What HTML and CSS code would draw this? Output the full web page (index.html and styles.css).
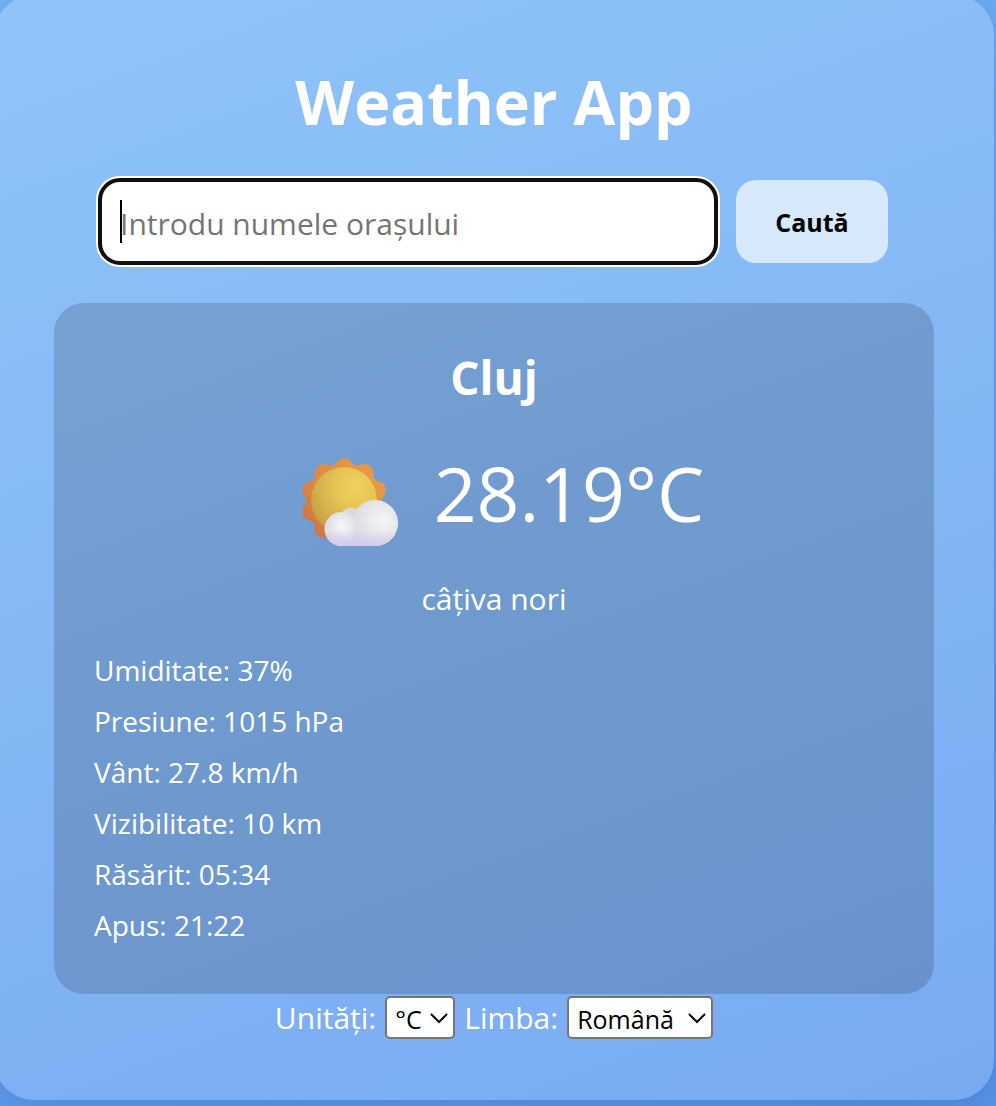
FILE: index.html
```html
<!DOCTYPE html>
<html lang="ro">
<head>
<meta charset="utf-8">
<meta name="viewport" content="width=device-width, initial-scale=1">
<title>Weather App</title>
<link rel="stylesheet" href="styles.css">
</head>
<body>
<main class="card">
  <h1 class="title">Weather App</h1>
  <form class="search">
    <div class="field">
      <input class="city-input" type="text" placeholder="Introdu numele orașului" aria-label="Introdu numele orașului">
    </div>
    <button class="search-button" type="button">Caută</button>
  </form>
  <section class="weather">
    <h2 class="city">Cluj</h2>
    <div class="now">
      <svg class="icon" viewBox="0 0 120 120" aria-hidden="true">
        <defs>
          <linearGradient id="rays" gradientUnits="userSpaceOnUse" x1="30" y1="-30" x2="-30" y2="30">
            <stop offset="0" stop-color="#ea9a44"/>
            <stop offset=".5" stop-color="#df8a42"/>
            <stop offset="1" stop-color="#cf7746"/>
          </linearGradient>
          <radialGradient id="disk" cx=".68" cy=".3" r=".75">
            <stop offset="0" stop-color="#f1d25f"/>
            <stop offset=".45" stop-color="#e4c453"/>
            <stop offset="1" stop-color="#c8a245"/>
          </radialGradient>
          <radialGradient id="puff-large" gradientUnits="userSpaceOnUse" cx="98" cy="79" r="30">
            <stop offset="0" stop-color="#f6f6f8"/>
            <stop offset=".5" stop-color="#e8e8eb"/>
            <stop offset="1" stop-color="#dadadf"/>
          </radialGradient>
          <radialGradient id="puff-small" gradientUnits="userSpaceOnUse" cx="58" cy="85" r="18">
            <stop offset="0" stop-color="#f8f8fb"/>
            <stop offset="1" stop-color="#dadadf"/>
          </radialGradient>
          <linearGradient id="base" gradientUnits="userSpaceOnUse" x1="0" y1="90" x2="0" y2="105">
            <stop offset="0" stop-color="#d4c8ee" stop-opacity="0"/>
            <stop offset="1" stop-color="#d4c8ee" stop-opacity=".9"/>
          </linearGradient>
        </defs>
        <g transform="translate(60 60)" fill="url(#rays)">
          <circle r="38"/>
          <path d="M-9-34a9 9 0 0 1 18 0zM-9 34a9 9 0 0 0 18 0z"/>
          <circle cx="20" cy="-27.500" r="9.500"/>
          <circle cx="32.300" cy="-10.500" r="9.500"/>
          <circle cx="32.300" cy="10.500" r="9.500"/>
          <circle cx="20" cy="27.500" r="9.500"/>
          <circle cx="-20" cy="27.500" r="9.500"/>
          <circle cx="-32.300" cy="10.500" r="9.500"/>
          <circle cx="-32.300" cy="-10.500" r="9.500"/>
          <circle cx="-20" cy="-27.500" r="9.500"/>
        </g>
        <circle cx="60" cy="59" r="33" fill="url(#disk)"/>
        <circle cx="67" cy="77" r="10.500" fill="#dadad7"/>
        <path fill="url(#puff-large)" d="M58 105a17 17 0 1 1 11-29.500A23 23 0 1 1 89.500 105z"/>
        <circle cx="58" cy="88" r="17" fill="url(#puff-small)"/>
        <path fill="url(#base)" d="M41 88a17 17 0 0 0 17 17h31.500a23 23 0 0 0 23-23z"/>
      </svg>
      <div class="temperature">28.19°C</div>
    </div>
    <p class="description">câțiva nori</p>
    <div class="details">
      <p class="detail">Umiditate: 37%</p>
      <p class="detail">Presiune: 1015 hPa</p>
      <p class="detail">Vânt: 27.8 km/h</p>
      <p class="detail">Vizibilitate: 10 km</p>
      <p class="detail">Răsărit: 05:34</p>
      <p class="detail">Apus: 21:22</p>
    </div>
  </section>
  <div class="settings">
    <label for="units">Unități:</label>
    <span class="picker"><select id="units" class="select"><option>°C</option><option>°F</option></select><svg class="chevron" viewBox="0 0 18 12" aria-hidden="true"><path d="M1 2l8 8 8-8"/></svg></span>
    <label for="language">Limba:</label>
    <span class="picker"><select id="language" class="select select-wide"><option>Română</option><option>English</option></select><svg class="chevron" viewBox="0 0 18 12" aria-hidden="true"><path d="M1 2l8 8 8-8"/></svg></span>
  </div>
</main>
</body>
</html>
```
FILE: styles.css
```css
* {
  box-sizing: border-box;
}

body {
  margin: 0;
  min-height: 100vh;
  overflow: hidden;
  font-family: "Segoe UI", "Open Sans", "Noto Sans", sans-serif;
  font-size: 30px;
  color: #fff;
  background: linear-gradient(160deg, #74b5f8, #5895ed);
}

.card {
  margin: -5px 2px 6px -6px;
  padding: 60px 60px 61px;
  border-radius: 40px;
  background: rgba(255, 255, 255, 0.2);
  box-shadow: 0 8px 40px rgba(0, 0, 0, 0.15);
}

.title {
  margin: 0 0 32px;
  font-size: 61px;
  line-height: 93px;
  font-weight: 700;
  text-align: center;
}

.search {
  display: flex;
  justify-content: center;
  gap: 20px;
  margin: 0 46px 40px;
}

.field {
  position: relative;
  flex: 1;
  display: flex;
}

/* Text caret at the start of the field */
.field::before {
  content: "";
  position: absolute;
  left: 20px;
  top: 20px;
  width: 2px;
  height: 43px;
  background: #000;
}

.city-input {
  flex: 1;
  min-width: 0;
  height: 83px;
  padding: 4px 20px 0;
  border: 0;
  border-radius: 20px;
  outline: 4px solid #101010;
  outline-offset: -2px;
  box-shadow: 0 0 0 4px #fff;
  background: #fff;
  font-family: inherit;
  font-size: 30px;
  color: #000;
}

.city-input::placeholder {
  color: #757575;
  opacity: 1;
}

.search-button {
  width: 152px;
  padding: 0;
  border: 0;
  border-radius: 20px;
  background: rgba(255, 255, 255, 0.67);
  font-family: inherit;
  font-size: 25px;
  font-weight: 700;
  color: #000;
}

.weather {
  padding: 40px 40px 49px;
  border-radius: 30px;
  background: rgba(0, 0, 0, 0.15);
}

.city {
  margin: 0 0 30px;
  font-size: 46px;
  line-height: 68px;
  text-align: center;
}

.now {
  display: flex;
  align-items: flex-start;
  justify-content: center;
  gap: 30px;
}

.icon {
  width: 120px;
  height: 120px;
}

.temperature {
  font-size: 75px;
  line-height: 104px;
}

.description {
  margin: 18px 0 31px;
  line-height: 40px;
  text-align: center;
}

.details {
  display: grid;
  gap: 11px;
}

.detail {
  margin: 0;
  font-size: 28px;
  line-height: 40px;
}

.settings {
  display: flex;
  align-items: center;
  justify-content: center;
  gap: 9px;
  padding-top: 2px;
}

.picker {
  position: relative;
  display: flex;
}

.select {
  appearance: none;
  width: 70px;
  height: 43px;
  padding: 2px 8px 0;
  border: 2px solid #767676;
  border-radius: 5px;
  background: #fff;
  font-family: inherit;
  font-size: 25px;
  color: #000;
}

.select-wide {
  width: 146px;
}

.chevron {
  position: absolute;
  right: 7px;
  top: 16px;
  width: 18px;
  height: 12px;
  fill: none;
  stroke: #000;
  stroke-width: 2;
  pointer-events: none;
}
```
